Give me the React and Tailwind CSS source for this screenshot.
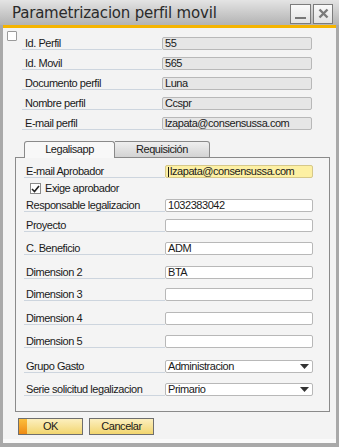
import React from 'react';

const FONT = { fontFamily: '"Liberation Sans", Arial, sans-serif' };
const TITLE_FONT = { fontFamily: '"DejaVu Sans", "Liberation Sans", sans-serif' };

const TXT = 'text-[11px] text-[#1a1a1a] tracking-[-0.45px]';

function TopRow({ label, value }) {
  return (
    <div className="flex items-end h-[20px]">
      <div className={`w-[140px] h-[13px] border-b border-[#cdd5de] pl-[3px] leading-[12px] ${TXT}`}>{label}</div>
      <div className={`w-[150px] h-[13px] border border-[#b8b8b8] rounded-[2px] bg-[#e6e6e6] pl-[2px] leading-[11px] ${TXT}`}>{value}</div>
    </div>
  );
}

function Row({ label, value, mt, yellow, select }) {
  return (
    <div className={`flex items-end ${mt}`}>
      <div className={`w-[141px] h-[13px] border-b border-[#cdd5de] pl-[2px] leading-[12px] ${TXT}`}>{label}</div>
      <div className={`w-[148px] h-[13px] border rounded-[2px] pl-[2px] leading-[11px] flex items-center justify-between ${TXT} ${yellow ? 'bg-[#fdf0a3] border-[#d6c88a]' : 'bg-white border-[#b8b8b8]'}`}>
        <span className="flex items-center">
          {yellow && <span className="inline-block w-[1px] h-[10px] bg-[#1a1a1a] mr-[1px]" />}
          {value}
        </span>
        {select && (
          <svg width="9" height="6" viewBox="0 0 9 6" className="mr-[3px]"><path d="M0 0H9L4.5 5Z" fill="#333" /></svg>
        )}
      </div>
    </div>
  );
}

export default function App() {
  return (
    <div className="w-[339px] h-[447px] bg-[#a9a9a9] flex flex-col overflow-hidden" style={FONT}>
      {/* title bar */}
      <div className="h-[25px] flex items-center justify-between bg-gradient-to-b from-[#e4e4e4] to-[#b3b3b3] pl-[12px] pr-[6px] shrink-0">
        <span className="text-[15px] text-[#2a2a2a] tracking-[-0.2px] mt-[1px]" style={TITLE_FONT}>Parametrizacion perfil movil</span>
        <div className="flex gap-[2px] mt-[2px]">
          <div className="w-[21px] h-[20px] border border-[#7c7c7c] bg-gradient-to-b from-[#fafafa] to-[#e2e2e2] flex items-end justify-center pb-[4px]">
            <div className="w-[11px] h-[2px] bg-[#777]" />
          </div>
          <div className="w-[20px] h-[20px] border border-[#7c7c7c] bg-gradient-to-b from-[#fafafa] to-[#e2e2e2] flex items-center justify-center">
            <svg width="11" height="11" viewBox="0 0 11 11"><path d="M1.5 1.5L9.5 9.5M9.5 1.5L1.5 9.5" stroke="#7a7a7a" strokeWidth="2.4" /></svg>
          </div>
        </div>
      </div>
      {/* body */}
      <div className="flex-1 mx-[3px] mb-[4px] flex flex-col bg-[#f2f2f2]">
        <div className="h-[3px] bg-[#f5b400] shrink-0" />
        <div className="relative flex-1 bg-[#f3f3f3] pl-[19px]">
          <div className="absolute left-[4px] top-[3px] w-[10px] h-[10px] border border-[#9a9a9a] bg-white rounded-[1px]" />
          <div className="pt-[2px]">
            <TopRow label="Id. Perfil" value="55" />
            <TopRow label="Id. Movil" value="565" />
            <TopRow label="Documento perfil" value="Luna" />
            <TopRow label="Nombre perfil" value="Ccspr" />
            <TopRow label="E-mail perfil" value="lzapata@consensussa.com" />
          </div>

          {/* tabs */}
          <div className="flex mt-[11px] ml-[2px] h-[17px]">
            <div className={`w-[91px] h-[17px] border border-b-0 border-[#8a8a8a] rounded-t-[3px] bg-[#f8f8f8] leading-[15px] text-center relative z-10 ${TXT}`}>Legalisapp</div>
            <div className={`w-[95px] h-[17px] border border-l-0 border-[#8a8a8a] rounded-tr-[3px] bg-gradient-to-b from-[#efefef] to-[#d3d3d3] leading-[15px] text-center ${TXT}`}>Requisición</div>
          </div>
          <div className="ml-[-7px] w-[315px] border border-[#8a8a8a] bg-[#f4f4f4] pl-[8px] pt-[7px] pb-[15px] -mt-[1px]">
            <Row label="E-mail Aprobador" value="lzapata@consensussa.com" mt="mt-0" yellow />
            <div className="flex items-center mt-[5px] ml-[6px] h-[11px]">
              <div className="w-[11px] h-[11px] border border-[#8a8a8a] bg-white flex items-center justify-center">
                <svg width="9" height="8" viewBox="0 0 9 8"><path d="M1 4L3.5 6.5L8 1" stroke="#222" strokeWidth="1.6" fill="none" /></svg>
              </div>
              <span className={`ml-[4px] leading-[11px] ${TXT}`}>Exige aprobador</span>
            </div>
            <Row label="Responsable legalizacion" value="1032383042" mt="mt-[5px]" />
            <Row label="Proyecto" value="" mt="mt-[7px]" />
            <Row label="C. Beneficio" value="ADM" mt="mt-[10px]" />
            <Row label="Dimension 2" value="BTA" mt="mt-[11px]" />
            <Row label="Dimension 3" value="" mt="mt-[9px]" />
            <Row label="Dimension 4" value="" mt="mt-[11px]" />
            <Row label="Dimension 5" value="" mt="mt-[10px]" />
            <Row label="Grupo Gasto" value="Administracion" mt="mt-[12px]" select />
            <Row label="Serie solicitud legalizacion" value="Primario" mt="mt-[10px]" select />
          </div>

          {/* buttons */}
          <div className="flex gap-[6px] mt-[6px] ml-[-4px]">
            <div className={`relative w-[65px] h-[17px] border border-[#6e6e6e] bg-gradient-to-b from-[#fcefbe] to-[#f2d56c] leading-[15px] text-center overflow-hidden ${TXT}`}>
              <div className="absolute left-0 top-0 bottom-0 w-[8px] bg-gradient-to-b from-[#fbbf3c] to-[#ee8a10]" />
              <span className="relative">OK</span>
            </div>
            <div className={`w-[65px] h-[17px] border border-[#6e6e6e] bg-gradient-to-b from-[#fcefbe] to-[#f2d56c] leading-[15px] text-center ${TXT}`}>Cancelar</div>
          </div>
        </div>
        <div className="h-[4px] bg-[#fafafa] shrink-0" />
      </div>
    </div>
  );
}
